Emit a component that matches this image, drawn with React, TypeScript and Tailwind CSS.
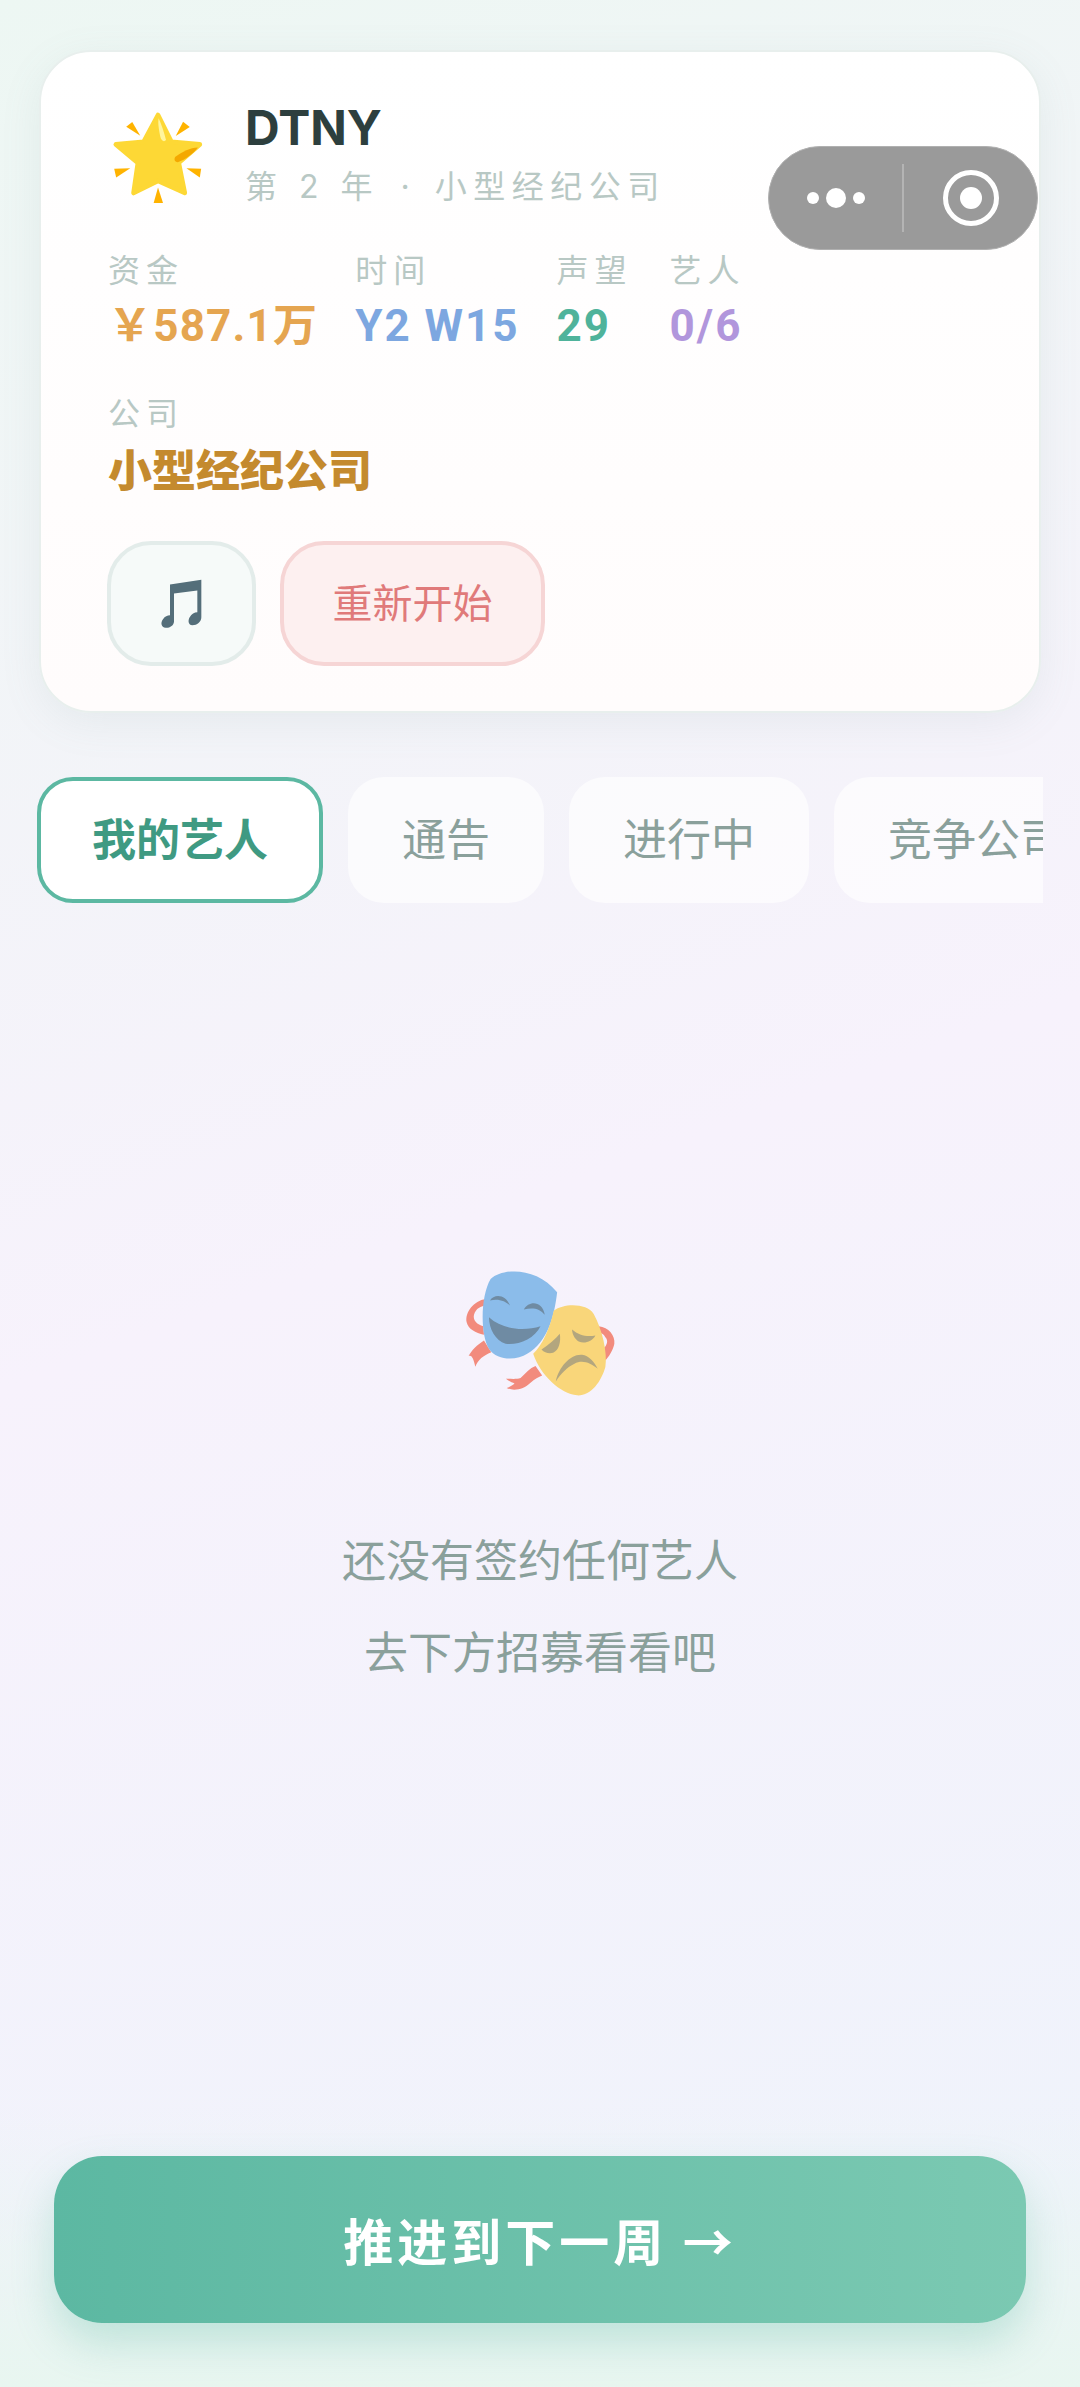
const font = "font-['Inter','Noto_Sans_CJK_SC',sans-serif]";

interface Stat {
  label: string;
  value: string;
  color: string;
  tracking: string;
}

const stats: Stat[] = [
  { label: '资金', value: '￥587.1万', color: 'text-[#e5a550]', tracking: 'tracking-[1.2px]' },
  { label: '时间', value: 'Y2 W15', color: 'text-[#7da7e0]', tracking: 'tracking-[2px]' },
  { label: '声望', value: '29', color: 'text-[#4fb39b]', tracking: 'tracking-[2px]' },
  { label: '艺人', value: '0/6', color: 'text-[#b196dc]', tracking: 'tracking-[2px]' },
];

const tabs = ['我的艺人', '通告', '进行中', '竞争公司'];

function GlowingStar() {
  return (
    <svg viewBox="60 60 280 290" className="w-[94px] h-[97px] shrink-0 mt-[11px]">
      <path
        d="M203 75 L243 155 L328 163 L265 218 L283 308 L203 272 L130 308 L143 218 L77 163 L160 155 Z"
        fill="#fdd835"
        stroke="#fdd835"
        strokeWidth="14"
        strokeLinejoin="round"
      />
      <path d="M205 85 C214 105 222 130 227 150 C220 158 212 150 210 140 C206 120 202 100 205 85 Z" fill="#fff59d" />
      <path d="M255 200 C275 185 300 172 322 172 C310 190 285 208 262 216 C252 216 250 206 255 200 Z" fill="#f4a800" />
      <g fill="#ffb300">
        <path d="M108 110 L126 96 L150 137 Z" />
        <path d="M278 95 L298 111 L256 138 Z" />
        <path d="M72 236 L120 234 L78 262 Z" />
        <path d="M288 234 L332 236 L328 262 Z" />
        <path d="M203 292 L218 338 L190 338 Z" />
      </g>
    </svg>
  );
}

function MusicNotes() {
  return (
    <svg viewBox="370 655 135 155" className="w-[45px] h-[52px]">
      <path
        d="M403 674 L497 660 V772 C497 786 484 796 470 796 C458 796 456 782 462 772 C468 762 476 757 485 757 V692 L415 701 V785 C415 797 402 805 390 804 C376 802 374 788 382 778 C388 769 395 766 403 766 Z"
        fill="#546e7a"
      />
    </svg>
  );
}

function Masks() {
  return (
    <svg viewBox="100 85 460 395" className="w-[153px] h-[132px]">
      <g fill="#f28b7d">
        <path d="M165 180 C130 185 102 220 108 250 C112 270 135 282 160 288 L158 262 C140 258 126 245 130 228 C136 208 150 202 168 200 Z" />
        <path d="M160 305 C140 318 122 335 114 352 C122 348 128 356 134 384 C142 362 158 350 182 340 Z" />
        <path d="M505 262 C535 265 555 290 552 315 C548 335 535 355 525 365 L518 330 C530 320 535 305 525 295 C520 285 512 282 505 282 Z" />
        <path d="M315 382 C298 388 285 405 270 418 C258 422 240 420 226 420 C235 428 245 432 252 434 C245 440 235 445 228 448 C250 458 280 452 300 432 C312 420 325 414 335 410 Z" />
      </g>
      <path d="M180 120 C220 85 320 85 380 160 C372 230 352 310 290 345 C260 365 200 368 175 330 C148 285 150 170 180 120 Z" fill="#8bbcea" />
      <path d="M370 215 C400 192 470 192 490 225 C515 270 532 340 525 385 C512 430 482 472 440 470 C390 465 330 410 308 345 C335 320 358 270 370 215 Z" fill="#f9d67a" />
      <g fill="#6f8ba3">
        <path d="M178 185 C190 165 225 165 238 200 C225 185 200 178 178 185 Z" />
        <path d="M280 212 C295 185 335 185 343 228 C328 208 305 205 280 212 Z" />
        <path d="M175 235 C215 272 280 278 330 262 C312 300 262 320 225 315 C195 305 175 270 175 235 Z" />
      </g>
      <g fill="#b3a67e">
        <path d="M333 332 C355 318 375 300 388 285 C392 310 385 335 368 342 C355 345 342 342 333 332 Z" />
        <path d="M425 272 C445 290 470 295 495 290 C485 310 460 315 445 308 C432 300 425 285 425 272 Z" />
        <path d="M376 428 C385 385 420 345 455 348 C475 350 492 370 502 390 C480 372 455 362 432 375 C410 385 392 405 376 428 Z" />
      </g>
    </svg>
  );
}

export default function App() {
  return (
    <div className={`${font} relative w-[1080px] h-[2387px] overflow-hidden flex flex-col bg-[linear-gradient(160deg,#edf7f3_0%,#f7f2fc_50%,#eef3fb_100%)]`}>
      {/* Status card */}
      <div className="mt-[50px] mx-[39px] w-[1002px] h-[663px] shrink-0 rounded-[52px] border-2 border-[#e8efed] bg-linear-to-b from-white to-[#fffcfc] shadow-[0_10px_40px_rgba(120,150,145,0.1)] pt-[47px] pl-[67px]">
        <div className="flex items-start gap-[41px] ml-[2px]">
          <GlowingStar />
          <div className="flex flex-col">
            <span className="text-[48px] leading-[58px] font-bold text-[#2d3f3e]">DTNY</span>
            <span className="text-[32px] leading-[44px] tracking-[6.5px] text-[#b8c8c4] whitespace-pre mt-[8px]">
              第 2 年<span className="ml-[6px] mr-[3px]"> · </span>小型经纪公司
            </span>
          </div>
        </div>

        <div className="flex gap-[37px] mt-[40px]">
          {stats.map((s) => (
            <div key={s.label} className="flex flex-col">
              <span className="text-[32px] leading-[44px] tracking-[6px] text-[#b8c8c4]">{s.label}</span>
              <span className={`font-['Roboto','Noto_Sans_CJK_SC',sans-serif] mt-[6px] text-[44px] leading-[54px] font-bold whitespace-pre ${s.tracking} ${s.color}`}>{s.value}</span>
            </div>
          ))}
        </div>

        <div className="flex flex-col mt-[39px]">
          <span className="text-[32px] leading-[44px] tracking-[6px] text-[#b8c8c4]">公司</span>
          <span className="mt-[7px] text-[44px] leading-[56px] font-black text-[#c48a2e]">小型经纪公司</span>
        </div>

        <div className="flex gap-[24px] mt-[42px] -ml-[1px]">
          <div className="w-[149px] h-[125px] rounded-[44px] border-4 border-[#e3ecea] bg-[#f6faf9] flex items-center justify-center">
            <MusicNotes />
          </div>
          <div className="w-[265px] h-[125px] rounded-[44px] border-4 border-[#f6d5d5] bg-[#fdf0f0] flex items-center justify-center text-[40px] text-[#e07a7a]">
            重新开始
          </div>
        </div>
      </div>

      {/* Tabs */}
      <div className="mt-[64px] ml-[37px] w-[1006px] h-[126px] shrink-0 flex gap-[25px] overflow-hidden">
        {tabs.map((t, i) => (
          <div
            key={t}
            className={
              i === 0
                ? 'shrink-0 h-full px-[51px] rounded-[36px] border-4 border-[#5cb8a2] bg-white flex items-center text-[44px] font-bold text-[#3f9a82]'
                : 'shrink-0 h-full px-[54px] rounded-[36px] bg-white/65 flex items-center text-[44px] text-[#8aa09b]'
            }
          >
            {t}
          </div>
        ))}
      </div>

      {/* Empty state */}
      <div className="flex-1 flex flex-col items-center pt-[364px]">
        <Masks />
        <div className="mt-[116px] text-[44px] leading-[92px] text-[#8aa09b] text-center">
          <div>还没有签约任何艺人</div>
          <div>去下方招募看看吧</div>
        </div>
      </div>

      {/* Next week */}
      <div className="shrink-0 bg-linear-to-t from-[#e8f6f0] to-transparent pt-[50px] pb-[64px] px-[54px]">
        <div className="h-[167px] rounded-[48px] bg-linear-to-r from-[#5cb8a2] to-[#7bc9b2] shadow-[0_20px_40px_rgba(92,184,162,0.3)] flex items-center justify-center font-['Noto_Sans_CJK_SC',sans-serif] text-[50px] font-bold tracking-[4px] text-white">
          推进到下一周 →
        </div>
      </div>

      {/* WeChat capsule */}
      <div className="absolute left-[768px] top-[146px] w-[270px] h-[104px] rounded-full bg-[#9a9a9a] border border-[#b0b0b0] flex items-center">
        <div className="w-[133px] flex items-center justify-center gap-[7px]">
          <span className="w-[12px] h-[12px] rounded-full bg-white" />
          <span className="w-[20px] h-[20px] rounded-full bg-white" />
          <span className="w-[12px] h-[12px] rounded-full bg-white" />
        </div>
        <div className="w-[2px] h-[68px] bg-[#b4b4b4]" />
        <div className="flex-1 flex items-center justify-center">
          <div className="w-[56px] h-[56px] rounded-full border-[5px] border-white flex items-center justify-center">
            <span className="w-[22px] h-[22px] rounded-full bg-white" />
          </div>
        </div>
      </div>
    </div>
  );
}
